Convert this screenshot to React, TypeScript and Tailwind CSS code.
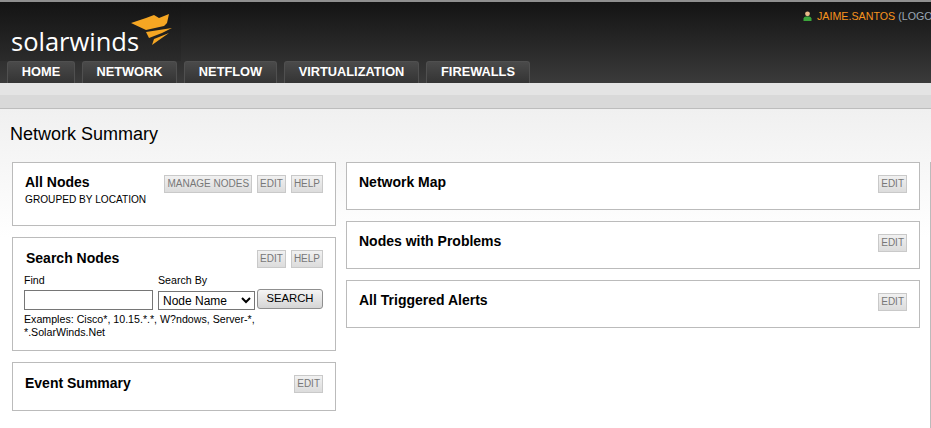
const Btn = ({ children }: { children: React.ReactNode }) => (
  <span className="flex h-[18px] items-center border border-[#c9c9c9] bg-gradient-to-b from-[#f1f1f1] to-[#dcdcdc] px-[2px] text-[10px] leading-none text-[#777]">
    {children}
  </span>
);

const Card = ({ title, h, shift }: { title: string; h: string; shift: string }) => (
  <section className={`flex justify-between border border-[#bbb] bg-white pl-3 pr-3 pt-3 ${h}`}>
    <h2 className={`text-[14px] font-bold leading-[18px] text-black ${shift}`}>{title}</h2>
    <div className="flex h-[18px] gap-[5px]">
      <Btn>EDIT</Btn>
    </div>
  </section>
);

const tabs = [
  ["HOME", "w-[68px]"],
  ["NETWORK", "w-[95px]"],
  ["NETFLOW", "w-[93px]"],
  ["VIRTUALIZATION", "w-[135px]"],
  ["FIREWALLS", "w-[104px]"],
];

export default function App() {
  return (
    <div className="h-[428px] w-[931px] overflow-hidden bg-white font-['Liberation_Sans',Arial,sans-serif] text-black">
      <header className="flex h-[83px] flex-col border-t-2 border-[#8f8f8f] bg-gradient-to-b from-[#141414] to-[#3b3b3b]">
        <div className="flex h-[59px] items-start">
          <div className="flex h-[59px] w-[181px] shrink-0 items-start bg-gradient-to-b from-[#141414] to-[#2b2b2b] pl-[11px]">
            <span className="mt-[21px] font-['Open_Sans',sans-serif] text-[25.5px] leading-[36px] text-white">solarwinds</span>
            <svg className="-ml-[8px] mt-[10px] shrink-0" width="44" height="34" viewBox="132 12 44 34" fill="#f5a623">
              <path d="M132 23 L147 18 L155 15 L160 18 L170 14 L168 23 L165 26 L147 30 Z" />
              <path d="M147 32 L173 28 L163 33 L150 38 Z" />
              <path d="M153 45 L155 39 L170 33 L160 40 Z" />
            </svg>
          </div>
          <div className="mt-[7px] flex min-w-0 flex-1 items-center overflow-hidden whitespace-nowrap pl-[622px] text-[10.7px] leading-[14px]">
            <svg width="9" height="10" viewBox="0 0 9 10" className="mr-[5px] shrink-0">
              <circle cx="4.5" cy="2.8" r="2.4" fill="#eab98a" />
              <path d="M0.5 10 V7.5 Q1 5.5 3 5.5 H6 Q8 5.5 8.500 7.500 V10 Z" fill="#3ba53b" />
            </svg>
            <span className="text-[#f7931e]">JAIME.SANTOS</span>
            <span className="ml-[3px] text-[#9aa7b5]">(LOGOUT)</span>
          </div>
        </div>
        <nav className="flex h-[22px] gap-[7px] pl-[7px]">
          {tabs.map(([t, w]) => (
            <a key={t} className={`flex items-center justify-center rounded-t-[3px] border border-b-0 border-[#505050] bg-gradient-to-b from-[#4a4a4a] to-[#343434] text-[12.8px] font-bold leading-none text-white ${w}`}>
              {t}
            </a>
          ))}
        </nav>
      </header>

      <div className="h-[12px] bg-[#e4e4e4]" />
      <div className="h-[14px] border-b border-[#bdbdbd] bg-[#d9d9d9]" />

      <main className="h-[320px] bg-gradient-to-b from-[#f0f0f0] to-white to-[40%]">
        <h1 className="pl-[10px] pt-[15px] text-[18px] leading-[20px]">Network Summary</h1>
        <div className="mt-[18px] flex h-[267px] items-start pl-[12px]">
          <div className="flex w-[324px] shrink-0 flex-col gap-[11px]">
            <section className="h-[64px] border border-[#bbb] bg-white pl-3 pr-3 pt-3">
              <div className="flex h-[18px] justify-between">
                <h2 className="-mt-[2px] text-[14px] font-bold leading-[18px]">All Nodes</h2>
                <div className="flex gap-[5px]">
                  <Btn>MANAGE NODES</Btn>
                  <Btn>EDIT</Btn>
                  <Btn>HELP</Btn>
                </div>
              </div>
              <p className="mt-[1px] text-[10.15px] leading-[12px]">GROUPED BY LOCATION</p>
            </section>

            <section className="h-[114px] border border-[#bbb] bg-white pl-[11px] pr-3 pt-3">
              <div className="flex h-[18px] justify-between pl-[2px]">
                <h2 className="-mt-[1px] text-[14px] font-bold leading-[18px]">Search Nodes</h2>
                <div className="flex gap-[5px]">
                  <Btn>EDIT</Btn>
                  <Btn>HELP</Btn>
                </div>
              </div>
              <div className="mt-[6px] flex items-end">
                <label className="flex w-[134px] shrink-0 flex-col text-[10.65px] leading-[13px]">
                  Find
                  <input className="mt-[3px] h-[20px] w-[129px] border border-[#767676] bg-white" />
                </label>
                <label className="flex w-[99px] shrink-0 flex-col text-[10.65px] leading-[13px]">
                  Search By
                  <select defaultValue="Node Name" className="mt-[4px] h-[19px] w-[97px] border border-[#767676] bg-white text-[12px] leading-none">
                    <option>Node Name</option>
                  </select>
                </label>
                <button className="mb-[1px] h-[20px] w-[66px] rounded-[3px] border border-[#8f8f8f] bg-gradient-to-b from-[#f5f5f5] to-[#d5d5d5] pb-[1px] text-[11.3px] leading-none text-black">
                  SEARCH
                </button>
              </div>
              <p className="mt-[3px] text-[10.65px] leading-[13px]">
                Examples: Cisco*, 10.15.*.*, W?ndows, Server-*,
                <br />
                *.SolarWinds.Net
              </p>
            </section>

            <Card title="Event Summary" h="h-[49px]" shift="-mt-[1px]" />
          </div>

          <div className="ml-[10px] flex w-[574px] shrink-0 flex-col gap-[11px]">
            <Card title="Network Map" h="h-[48px]" shift="-mt-[2px]" />
            <Card title="Nodes with Problems" h="h-[48px]" shift="-mt-[2px]" />
            <Card title="All Triggered Alerts" h="h-[48px]" shift="-mt-[2px]" />
          </div>

          <div className="ml-[9px] h-full w-[2px] border-r border-[#bbb]" />
        </div>
      </main>
    </div>
  );
}
